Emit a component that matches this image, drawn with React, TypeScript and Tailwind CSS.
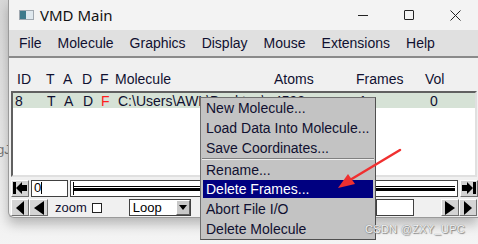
import React from "react";

const font = { fontFamily: '"Liberation Sans", Arial, sans-serif' };

function BarLeftIcon() {
  return (
    <svg width="14" height="12" viewBox="0 0 14 12">
      <rect x="0" y="0" width="3" height="12" fill="#000" />
      <polygon points="3,6 9,0 9,3 14,3 14,9 9,9 9,12" fill="#000" />
    </svg>
  );
}
function BarRightIcon() {
  return (
    <svg width="14" height="12" viewBox="0 0 14 12">
      <rect x="11" y="0" width="3" height="12" fill="#000" />
      <polygon points="11,6 5,0 5,3 0,3 0,9 5,9 5,12" fill="#000" />
    </svg>
  );
}
function TriLeft({ big }: { big?: boolean }) {
  return big ? (
    <svg width="10" height="14" viewBox="0 0 10 14">
      <polygon points="0,7 10,0 10,14" fill="#000" />
    </svg>
  ) : (
    <svg width="8" height="14" viewBox="0 0 8 14">
      <polygon points="0,7 8,0 8,14" fill="#000" />
    </svg>
  );
}
function TriRight({ big }: { big?: boolean }) {
  return big ? (
    <svg width="10" height="14" viewBox="0 0 10 14">
      <polygon points="10,7 0,0 0,14" fill="#000" />
    </svg>
  ) : (
    <svg width="8" height="14" viewBox="0 0 8 14">
      <polygon points="8,7 0,0 0,14" fill="#000" />
    </svg>
  );
}

function Btn({ children, w }: { children: React.ReactNode; w: string }) {
  return (
    <div
      className={`${w} h-[17px] flex items-center justify-center bg-[#d4d4d4] border border-t-white border-l-white border-r-[#707070] border-b-[#707070]`}
    >
      {children}
    </div>
  );
}

export default function App() {
  const menuItems = ["File", "Molecule", "Graphics", "Display", "Mouse", "Extensions", "Help"];
  return (
    <div
      className="relative w-[478px] h-[244px] overflow-hidden bg-gradient-to-b from-[#d8d8d8] to-[#f4f4f4] text-[#000]"
      style={font}
    >
      {/* background app text */}
      <div className="absolute left-[-3px] top-[140px] text-[13px] text-[#777]">gJ</div>

      {/* window */}
      <div className="relative ml-[8px] w-[470px] h-[218px] border-l border-b border-[#9a9a9a] rounded-bl-[6px] bg-[#f0f0f0] shadow-[0_6px_12px_rgba(0,0,0,0.25)] flex flex-col overflow-hidden">
        {/* title bar */}
        <div className="h-[30px] bg-[#f3f3f3] flex items-center">
          <div className="ml-[10px] w-[15px] h-[10px] bg-[#e8eef0] border border-[#a0a8b0] flex">
            <div className="w-[6px] h-full bg-[#3e7a8c]" />
            <div className="flex-1 bg-[#dfe8ee]" />
          </div>
          <span className="ml-[6px] text-[15px] text-[#111]" style={{ fontFamily: '"Noto Sans", "Liberation Sans", sans-serif' }}>
            VMD Main
          </span>
          <div className="flex-1" />
          <div className="w-[46px] flex justify-center">
            <div className="w-[10px] h-px bg-[#222]" />
          </div>
          <div className="w-[46px] flex justify-center">
            <div className="w-[10px] h-[10px] border border-[#222] rounded-[1px]" />
          </div>
          <div className="w-[46px] flex justify-center">
            <svg width="11" height="11" viewBox="0 0 11 11">
              <path d="M0.5 0.5 L10.5 10.5 M10.5 0.5 L0.5 10.5" stroke="#222" strokeWidth="1" />
            </svg>
          </div>
        </div>

        {/* menu bar */}
        <div className="h-[28px] bg-[#e0e0e0] border-b-2 border-[#8a8a8a] flex items-center pl-[10px] gap-[16px] text-[14px] text-[#101030]">
          {menuItems.map((m) => (
            <span key={m}>{m}</span>
          ))}
        </div>

        {/* header */}
        <div className="h-[33px] flex items-end pb-[1px] text-[14px] text-[#101030]">
          <span className="w-[37px] pl-[8px]">ID</span>
          <span className="w-[17px]">T</span>
          <span className="w-[19px]">A</span>
          <span className="w-[18px]">D</span>
          <span className="w-[15px]">F</span>
          <span className="w-[159px]">Molecule</span>
          <span className="w-[82px]">Atoms</span>
          <span className="w-[69px]">Frames</span>
          <span>Vol</span>
        </div>

        {/* list */}
        <div className="ml-[2px] mr-[1px] h-[86px] border-2 border-t-[#606060] border-l-[#606060] border-r-[#e0e0e0] border-b-[#e0e0e0] bg-white">
          <div className="h-[15px] bg-[#d6e2d6] flex items-center text-[14px] text-[#101030] leading-none">
            <span className="w-[34px] pl-[2px]">8</span>
            <span className="w-[17px]">T</span>
            <span className="w-[19px]">A</span>
            <span className="w-[18px]">D</span>
            <span className="w-[17px] text-[#ff2020]">F</span>
            <span className="w-[156px] whitespace-nowrap overflow-hidden">C:\Users\AWL\Desktop\w</span>
            <span className="w-[85px]">4592</span>
            <span className="w-[71px]">1</span>
            <span>0</span>
          </div>
        </div>

        {/* controls row 1 */}
        <div className="mt-[2px] h-[18px] flex items-center pl-[2px] gap-[2px]">
          <Btn w="w-[18px]">
            <BarLeftIcon />
          </Btn>
          <div className="w-[37px] h-[17px] bg-white border border-[#404040] flex items-center pl-[2px] text-[13px]">
            <span>0</span>
            <div className="w-px h-[12px] bg-black" />
          </div>
          <div className="flex-1 h-[17px] bg-white border border-[#404040] flex items-center pl-[2px] pr-[2px]">
            <div className="w-px h-[13px] bg-black" />
            <div className="flex-1 flex flex-col gap-[1px]">
              <div className="h-px bg-black" />
              <div className="h-[3px] bg-black" />
            </div>
          </div>
          <Btn w="w-[18px]">
            <BarRightIcon />
          </Btn>
        </div>

        {/* controls row 2 */}
        <div className="mt-[1px] h-[19px] flex items-center pl-[2px]">
          <Btn w="w-[18px]">
            <TriLeft />
          </Btn>
          <Btn w="w-[19px]">
            <TriLeft big />
          </Btn>
          <span className="ml-[7px] text-[13px] text-[#101030]">zoom</span>
          <div className="ml-[5px] w-[10px] h-[10px] border border-[#222] bg-white" />
          <div className="ml-[27px] w-[62px] h-[17px] border border-[#404040] bg-white flex items-center">
            <span className="pl-[3px] text-[13px] flex-1">Loop</span>
            <div className="w-[14px] h-[15px] bg-[#c8c8c8] border border-t-white border-l-white border-r-[#606060] border-b-[#606060] flex items-center justify-center">
              <svg width="8" height="5" viewBox="0 0 8 5">
                <polygon points="0,0 8,0 4,5" fill="#000" />
              </svg>
            </div>
          </div>
          <div className="flex-1" />
          <div className="w-[38px] h-[17px] bg-white border border-[#404040]" />
          <div className="w-[27px]" />
          <Btn w="w-[18px]">
            <TriRight big />
          </Btn>
          <Btn w="w-[18px]">
            <TriRight />
          </Btn>
          <div className="w-[1px]" />
        </div>
      </div>

      {/* context menu */}
      <div className="absolute left-[200px] top-[97px] w-[176px] h-[143px] bg-[#c3c3c3] border border-t-[#707070] border-l-[#707070] border-r-[#505050] border-b-[#505050] text-[14px] text-[#101030]">
        {["New Molecule...", "Load Data Into Molecule...", "Save Coordinates..."].map((t) => (
          <div key={t} className="h-[20px] flex items-center pl-[5px] whitespace-nowrap">
            {t}
          </div>
        ))}
        <div className="mx-[1px] border-t border-[#808080] border-b border-b-[#f0f0f0]" />
        <div className="h-[20px] flex items-center pl-[5px]">Rename...</div>
        <div className="h-[19px] pb-[1px] mx-[2px]">
          <div className="h-[18px] flex items-center pl-[3px] bg-[#000080] text-white">Delete Frames...</div>
        </div>
        <div className="h-[20px] flex items-center pl-[5px]">Abort File I/O</div>
        <div className="h-[20px] flex items-center pl-[5px]">Delete Molecule</div>
      </div>

      {/* red arrow annotation */}
      <svg className="absolute left-0 top-0" width="478" height="244" viewBox="0 0 478 244">
        <line x1="400" y1="150" x2="350" y2="180" stroke="#f03030" strokeWidth="2.5" strokeLinecap="round" />
        <polygon points="338,188 348,174 355,184" fill="#f03030" />
      </svg>

      {/* watermark */}
      <div
        className="absolute left-[365px] top-[221px] text-[11px] text-[#f4f4f4] tracking-[0.3px]"
        style={{ textShadow: "0 0 1px #666, 1px 1px 1px #888" }}
      >
        CSDN @ZXY_UPC
      </div>
    </div>
  );
}
